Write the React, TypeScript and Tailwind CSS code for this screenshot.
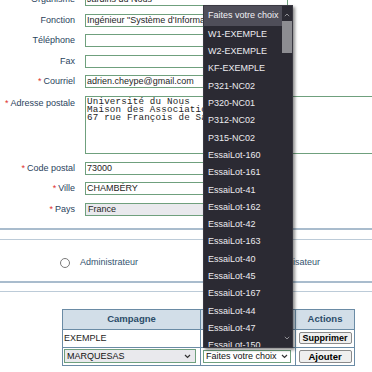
import React from 'react';

const lots = [
  'W1-EXEMPLE',
  'W2-EXEMPLE',
  'KF-EXEMPLE',
  'P321-NC02',
  'P320-NC01',
  'P312-NC02',
  'P315-NC02',
  'EssaiLot-160',
  'EssaiLot-161',
  'EssaiLot-41',
  'EssaiLot-162',
  'EssaiLot-42',
  'EssaiLot-163',
  'EssaiLot-40',
  'EssaiLot-45',
  'EssaiLot-167',
  'EssaiLot-44',
  'EssaiLot-47',
  'EssaiLot-150',
];

function Chevron({ className }: { className?: string }) {
  return (
    <svg className={className} width="7" height="5" viewBox="0 0 7 5" fill="none">
      <path d="M1 1l2.5 2.5L6 1" stroke="#333" strokeWidth="1.2" />
    </svg>
  );
}

function Label({ text, required }: { text: string; required?: boolean }) {
  return (
    <div className="w-[75px] shrink-0 text-right text-[9px] leading-[13px] text-[#2a435d] whitespace-nowrap">
      {required && <span className="text-[#e0322f] mr-[2px]">*</span>}
      {text}
    </div>
  );
}

function Field({ label, value, required }: { label: string; value?: string; required?: boolean }) {
  return (
    <div className="flex items-center h-[13px]">
      <Label text={label} required={required} />
      <div className="ml-[10px] w-[203px] h-[13px] shrink-0 border border-[#6fa07d] bg-white px-[1px] text-[9px] leading-[11px] text-[#1e1e1e] whitespace-nowrap overflow-hidden">
        {value}
      </div>
    </div>
  );
}

export default function App() {
  return (
    <div className="relative w-[372px] h-[372px] overflow-hidden bg-white font-['Liberation_Sans',Arial,sans-serif]">
      {/* Form rows */}
      <div className="flex flex-col gap-[7.6px] -mt-[7px]">
        <Field label="Organisme" value="Jardins du Nous" />
        <Field label="Fonction" value={'Ingénieur "Système d\'Information"'} />
        <Field label="Téléphone" />
        <Field label="Fax" />
        <Field label="Courriel" value="adrien.cheype@gmail.com" required />
        <div className="flex items-start h-[58px]">
          <div className="pt-[1px]">
            <Label text="Adresse postale" required />
          </div>
          <div className="ml-[10px] w-[300px] h-[58px] shrink-0 border border-[#6fa07d] bg-white px-[1px] pt-[1px] font-['Liberation_Mono',monospace] text-[9.2px] leading-[7.8px] tracking-[0.2px] text-[#1e1e1e] whitespace-pre">
            {'Université du Nous\nMaison des Associations\n67 rue François de Sales'}
          </div>
        </div>
        <Field label="Code postal" value="73000" required />
        <Field label="Ville" value="CHAMBÉRY" required />
        <div className="flex items-center h-[13px]">
          <Label text="Pays" required />
          <div className="ml-[10px] w-[203px] h-[13px] shrink-0 border border-[#6fa07d] bg-[#e9e9ed] px-[2px] text-[9px] leading-[11px] text-[#1e1e1e]">
            France
          </div>
        </div>
      </div>

      {/* Separators and role radios */}
      <div className="mt-[12px] h-[2px] bg-[#a9bccd]" />
      <div className="mt-[9px] h-[1px] bg-[#bccbd8]" />
      <div className="flex items-center h-[41px] pt-[5px]">
        <span className="ml-[60px] w-[10px] h-[10px] rounded-full border border-[#7a7a7a] bg-white" />
        <span className="ml-[10px] text-[9px] text-[#34536f]">Administrateur</span>
        <span className="ml-[122px] w-[10px] h-[10px] rounded-full border border-[#7a7a7a] bg-white" />
        <span className="ml-[10px] text-[9px] text-[#34536f]">Utilisateur</span>
      </div>
      <div className="h-[2px] bg-[#a9bccd]" />
      <div className="mt-[8px] h-[1px] bg-[#bccbd8]" />

      {/* Campaign / lot table */}
      <table className="mt-[17px] ml-[62px] border-collapse text-[9px] text-[#1e1e1e]">
        <thead>
          <tr className="h-[20px] bg-[#d2dee8]">
            <th className="w-[138px] border border-[#6a8ba5] font-bold text-[9.5px] text-[#2b4c69]">Campagne</th>
            <th className="w-[95px] border border-[#6a8ba5] font-bold text-[9.5px] text-[#2b4c69]">Lot</th>
            <th className="w-[59px] border border-[#6a8ba5] font-bold text-[9.5px] text-[#2b4c69]">Actions</th>
          </tr>
        </thead>
        <tbody>
          <tr className="h-[18px]">
            <td className="border border-[#6a8ba5] pl-[1px]">EXEMPLE</td>
            <td className="border border-[#6a8ba5]" />
            <td className="border border-[#6a8ba5] px-[1px]">
              <button className="w-[53px] h-[12px] mx-auto flex items-center justify-center rounded-[2px] border border-[#8a8a8a] bg-[#efefef] font-bold text-[9px] leading-none text-black">
                Supprimer
              </button>
            </td>
          </tr>
          <tr className="h-[18px]">
            <td className="border border-[#6a8ba5] px-[1px]">
              <div className="flex items-center justify-between w-[132px] h-[14px] border border-[#6fa07d] bg-[#e9e9ed] pl-[2px] pr-[4px] text-[9px] text-[#111]">
                MARQUESAS
                <Chevron />
              </div>
            </td>
            <td className="border border-[#6a8ba5] px-[2px]">
              <div className="flex items-center justify-between w-[88px] h-[13px] border border-[#6fa07d] bg-white pl-[2px] pr-[2px] text-[9px] text-[#111] whitespace-nowrap overflow-hidden">
                Faites votre choix
                <Chevron className="shrink-0" />
              </div>
            </td>
            <td className="border border-[#6a8ba5] px-[1px]">
              <button className="w-[53px] h-[13px] mx-auto flex items-center justify-center rounded-[2px] border border-[#8a8a8a] bg-[#efefef] font-bold text-[9.5px] leading-none text-black">
                Ajouter
              </button>
            </td>
          </tr>
        </tbody>
      </table>

      {/* Open select popup */}
      <div className="absolute left-[203px] top-[5px] w-[90px] h-[343px] bg-[#2b2a33] border border-[#3a3942] shadow-[2px_2px_3px_rgba(0,0,0,0.45)] overflow-hidden">
        <div className="mr-[10px]">
          <div className="h-[20px] flex items-center pl-[4px] bg-[#4f4e59] text-[9px] text-[#f2f2f5] whitespace-nowrap">
            Faites votre choix
          </div>
          {lots.map((lot) => (
            <div key={lot} className="h-[17.3px] flex items-center pl-[4px] text-[9px] text-[#ebebef] whitespace-nowrap">
              {lot}
            </div>
          ))}
        </div>
        {/* scrollbar */}
        <div className="absolute right-0 top-0 bottom-0 w-[10px] bg-[#2b2a33]">
          <svg className="absolute left-[2px] top-[7px]" width="6" height="4" viewBox="0 0 6 4" fill="none">
            <path d="M0.8 3.2L3 1l2.2 2.2" stroke="#8f8f94" strokeWidth="1" />
          </svg>
          <div className="absolute left-0 right-0 top-[15px] h-[32px] bg-[#8d8d92]" />
          <svg className="absolute left-[2px] bottom-[7px]" width="6" height="4" viewBox="0 0 6 4" fill="none">
            <path d="M0.8 0.8L3 3l2.2-2.2" stroke="#8f8f94" strokeWidth="1" />
          </svg>
        </div>
      </div>
    </div>
  );
}
